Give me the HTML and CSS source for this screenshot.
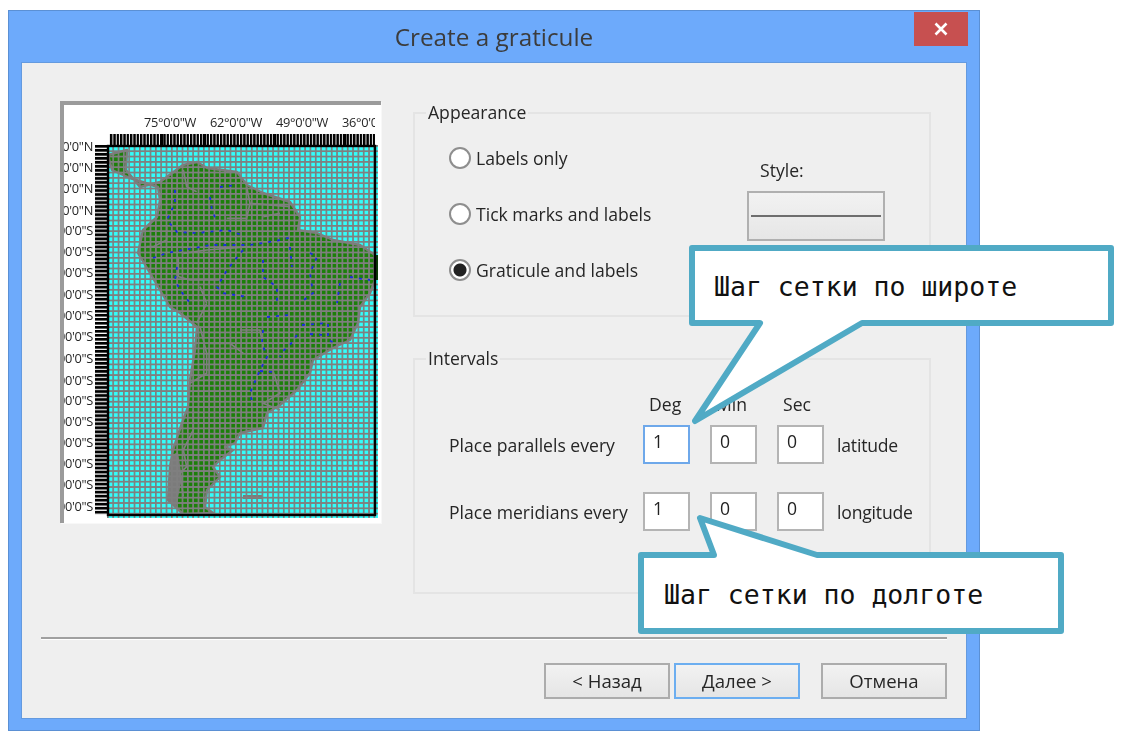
FILE: index.html
```html
<!DOCTYPE html>
<html lang="en">
<head>
	<meta charset="UTF-8">
	<title>Create a graticule</title>
	<link rel="stylesheet" href="styles.css">
</head>
<body>
	<div class="window">
		<div class="titlebar">
			<span></span>
			<div class="title">Create a graticule</div>
			<div class="close">
				<svg width="16" height="14" viewBox="0 0 16 14"><path d="M2.5 1.5 13.5 12.5M13.5 1.5 2.5 12.5" stroke="#fff" stroke-width="2.6" fill="none"/></svg>
			</div>
		</div>
		<div class="client">
			<div class="main">
				<div class="preview">
					<svg class="map" width="317" height="418" viewBox="64 105 317 418">
						<defs>
							<pattern id="cells" x="107" y="145" width="5.33" height="5.33" patternUnits="userSpaceOnUse">
								<path d="M0 0H5.33V1.7H0ZM0 0H1.7V5.33H0Z" fill="#7f7f7f"/>
							</pattern>
							<pattern id="tickx" x="110" y="134" width="3.33" height="11" patternUnits="userSpaceOnUse">
								<rect x="0" width="2.4" height="11" fill="#000"/>
							</pattern>
							<pattern id="ticky" x="95" y="145" width="12" height="4.02" patternUnits="userSpaceOnUse">
								<rect y="0" width="12" height="2.8" fill="#000"/>
							</pattern>
						</defs>
						<rect x="109" y="134" width="266" height="11" fill="url(#tickx)"/>
						<rect x="160" y="134" width="3" height="11"/><rect x="203" y="134" width="3" height="11"/><rect x="273" y="134" width="3" height="11"/><rect x="343" y="134" width="3" height="11"/>
						<rect x="95" y="145" width="12" height="370" fill="url(#ticky)"/>
						<g class="map-label">
							<text x="144" y="127">75°0'0"W</text>
							<text x="210" y="127">62°0'0"W</text>
							<text x="276" y="127">49°0'0"W</text>
							<text x="342" y="127">36°0'0"W</text>
						</g>
						<rect x="375" y="105" width="6" height="41" fill="#fff"/>
						<g class="map-label lat">
							<text x="93" y="151">70'0"N</text>
							<text x="93" y="172">70'0"N</text>
							<text x="93" y="193">30'0"N</text>
							<text x="93" y="215">30'0"N</text>
							<text x="93" y="235">00'0"S</text>
							<text x="93" y="256">00'0"S</text>
							<text x="93" y="277">00'0"S</text>
							<text x="93" y="299">00'0"S</text>
							<text x="93" y="320">00'0"S</text>
							<text x="93" y="341">00'0"S</text>
							<text x="93" y="363">00'0"S</text>
							<text x="93" y="385">00'0"S</text>
							<text x="93" y="405">00'0"S</text>
							<text x="93" y="426">00'0"S</text>
							<text x="93" y="447">00'0"S</text>
							<text x="93" y="468">00'0"S</text>
							<text x="93" y="489">00'0"S</text>
							<text x="93" y="511">00'0"S</text>
						</g>
						<rect x="107" y="145" width="271" height="373" fill="#33fdfa"/>
						<!-- land -->
						<path class="land" d="M108 155 127 150 126 170 140 187 160 182 183 165 197 162 207 168 237 172 247 185 263 193 290 202 300 217 298 230 317 233 333 240 360 245 375 255 375 280 370 293 360 307 358 323 350 340 333 348 313 360 310 373 297 390 280 405 267 413 263 428 240 433 235 443 225 447 233 450 220 460 213 467 220 477 207 490 205 507 213 513 183 514 168 500 170 467 173 450 182 423 188 407 190 380 195 350 197 327 180 313 170 307 160 290 150 273 138 253 143 230 157 217 160 200 158 187 130 178 112 170Z"/>
						<path class="patagonia" d="M172 455 178 452 182 478 176 508 168 500Z"/>
						<path class="land-thin" d="M243 497H262"/>
						<!-- borders, traced on the crop of the top half -->
						<g class="borders" transform="translate(50 90) scale(.3333)">
							<path d="M400 240 410 290 440 305M590 290 600 340 590 385 530 385M600 340 720 350M640 380 690 370M350 410 350 450 310 470 290 470M400 490 470 480 600 470M385 500 385 560 420 570 510 570M450 590 470 640M470 640 440 700"/>
						</g>
						<g class="borders" transform="translate(50 310) scale(.3333)">
							<path d="M450 50 470 130 470 190 420 220M570 60 630 60 640 110M480 100 540 100 580 130M670 185 690 250 640 280 690 300M430 300 430 360 400 420 410 470 390 490M390 490 400 560"/>
						</g>
						<rect x="107" y="145" width="271" height="373" fill="url(#cells)"/>
						<!-- rivers -->
						<g class="rivers">
							<path d="M153 258 167 253 183 250 200 247 210 245 230 245 250 245 263 243 280 240 293 237"/>
							<path d="M175 190 175 203 167 220 177 232 197 233 227 230 242 235"/>
							<path d="M210 197 212 210 217 222M220 187 237 185"/>
							<path d="M177 267 175 280 180 290 190 303"/>
							<path d="M243 250 227 270 217 287 223 293 247 297"/>
							<path d="M263 260 263 277 277 287 277 303"/>
							<path d="M310 253 317 257 310 273 313 293 300 303"/>
							<path d="M290 247 292 267M340 283 337 303M350 277 370 280"/>
							<path d="M267 317 290 315M302 325 328 323 328 340 333 342M310 334 323 335M297 335 290 345 282 352 280 357"/>
							<path d="M263 330 262 343 267 357 260 370 257 377 250 393 253 405M260 371 273 372"/>
						</g>
						<rect x="375" y="255" width="3" height="25" fill="#0c3c08"/>
						<rect x="108" y="146" width="267" height="369" class="map-frame"/>
					</svg>
				</div>
				<div class="groups">
					<fieldset class="group appearance">
						<legend>Appearance</legend>
						<div class="radios">
							<label class="radio-row"><input type="radio" name="kind">Labels only</label>
							<label class="radio-row"><input type="radio" name="kind">Tick marks and labels</label>
							<label class="radio-row"><input type="radio" name="kind" checked>Graticule and labels</label>
						</div>
						<div class="style-box">
							<div class="style-label">Style:</div>
							<div class="style-btn"><div class="style-line"></div></div>
						</div>
					</fieldset>
					<fieldset class="group intervals">
						<legend>Intervals</legend>
						<div class="interval-grid">
							<span></span>
							<span class="col-head">Deg</span>
							<span class="col-head">Min</span>
							<span class="col-head">Sec</span>
							<span></span>
							<span>Place parallels every</span>
							<input class="num focused" value="1">
							<input class="num" value="0">
							<input class="num" value="0">
							<span class="unit">latitude</span>
							<span>Place meridians every</span>
							<input class="num" value="1">
							<input class="num" value="0">
							<input class="num" value="0">
							<span class="unit">longitude</span>
						</div>
					</fieldset>
				</div>
			</div>
			<div class="separator"></div>
			<div class="buttons">
				<button class="btn">&lt; Назад</button>
				<button class="btn default">Далее &gt;</button>
				<button class="btn cancel">Отмена</button>
			</div>
		</div>
	</div>

	<div class="callout callout-lat">
		<svg class="callout-shape" width="440" height="190" viewBox="0 0 440 190"><path d="M3 3H422V78H173L6 176 71 78H3Z"/></svg>
		<span class="callout-text">Шаг сетки по широте</span>
	</div>
	<div class="callout callout-lon">
		<svg class="callout-shape" width="440" height="130" viewBox="0 0 440 130"><path d="M3 42H76L62 5 179 42H423V118H3Z"/></svg>
		<span class="callout-text">Шаг сетки по долготе</span>
	</div>
</body>
</html>
```

FILE: styles.css
```css
* {margin: 0;padding: 0;box-sizing: border-box;}
html, body {height: 100%;background: #fff;overflow: hidden;}
body {position: relative;font-family: "Open Sans", "Noto Sans", sans-serif;font-size: 17.6px;color: #262626;}

.window {width: 972px;height: 721px;margin: 10px 0 0 8px;background: #6daafb;border: 1px solid #5b90d4;display: flex;flex-direction: column;}
.titlebar {height: 51px;flex: none;display: grid;grid-template-columns: 1fr auto 1fr;padding: 0 11px;}
.title {font-size: 24.3px;color: #3c3c3c;padding-top: 9px;filter: blur(.35px);}
.close {justify-self: end;width: 54px;height: 34px;margin-top: 1px;background: #c75050;display: flex;align-items: center;justify-content: center;}

.client {margin: 0 12px 11px;flex: 1;background: #efefef;border: 1px solid #649adf;display: flex;flex-direction: column;}
.main {display: flex;height: 573px;padding: 38px 0 0 38px;}

.preview {width: 321px;height: 422px;background: #fff;border-style: solid;border-width: 4px 0 0 4px;border-color: #9b9b9b;flex: none;box-shadow: 1px 1px 0 #f8f8f8;}
.map {display: block;}
.map-label {font-size: 12.8px;fill: #262626;letter-spacing: -.3px;filter: blur(.3px);}
.lat {text-anchor: end;}
.land {fill: #1c7f0a;stroke: #7b7b7b;stroke-width: 2.4;stroke-linejoin: round;}
.patagonia {fill: #7b7b7b;}
.land-thin {stroke: #7b7b7b;stroke-width: 4;fill: none;}
.borders path {fill: none;stroke: #7f7f7f;stroke-width: 5;}
.rivers path {fill: none;stroke: #1c2ce0;stroke-width: 1.8;stroke-dasharray: 3 6;}
.map-frame {fill: none;stroke: #000;stroke-width: 2.4;}

.groups {margin-left: 32px;width: 518px;display: flex;flex-direction: column;gap: 30px;filter: blur(.35px);}
.group {border: 2px solid #e4e4e4;padding: 0 0 0 34px;}
.group legend {margin-left: -23px;padding: 0 2px;line-height: 23px;}
.appearance {height: 216px;display: flex;}
.intervals {height: 247px;}

.radios {width: 298px;padding-top: 22px;display: flex;flex-direction: column;gap: 33px;}
.radio-row {display: flex;align-items: center;gap: 5px;height: 23px;}
.radio-row input {appearance: none;width: 22px;height: 22px;border-radius: 50%;border: 2px solid #8e8e8e;background: #fff;}
.radio-row input:checked {background: radial-gradient(circle, #222 0 6px, #fff 7px);}
.style-box {padding-top: 34px;}
.style-label {margin-left: 13px;line-height: 24px;}
.style-btn {width: 138px;height: 50px;margin-top: 9px;border: 2px solid #b0b0b0;background: linear-gradient(#f2f2f2, #e6e6e6);padding-top: 22px;}
.style-line {height: 2px;margin: 0 2px;background: #6e6e6e;}

.interval-grid {display: grid;grid-template-columns: 174px 47px 47px 47px auto;column-gap: 20px;row-gap: 28px;align-items: center;padding-top: 22px;}
.interval-grid > span {white-space: nowrap;}
.col-head {padding-left: 6px;margin-bottom: -19px;line-height: 24px;}
.num {width: 47px;height: 39px;border: 2px solid #b4b4b4;background: #fff;font: inherit;color: #222;padding: 0 8px 7px;}
.num.focused {border-color: #6ea8ea;}
.unit {margin-left: -7px;letter-spacing: -.2px;}

.separator {margin: 1px 19px 0;height: 3px;width: 906px;background: #a0a0a0;border-bottom: 1px solid #fff;}
.buttons {display: flex;justify-content: flex-end;gap: 4px;padding: 23px 19px 0 0;filter: blur(.35px);}
.btn {width: 126px;height: 36px;border: 2px solid #acacac;background: linear-gradient(#f2f2f2, #e5e5e5);font: inherit;font-size: 18.6px;line-height: 1;color: #262626;}
.btn.default {border-color: #6caef0;}
.btn.cancel {margin-left: 17px;}

.callout {position: absolute;display: flex;align-items: center;font-family: "DejaVu Sans Mono", monospace;font-size: 26.5px;color: #111;}
.callout-shape {position: absolute;left: 0;top: 0;overflow: visible;}
.callout-shape path {fill: #fff;stroke: #50aac5;stroke-width: 6;stroke-linejoin: round;}
.callout-text {position: relative;white-space: pre;}
.callout-lat {left: 689px;top: 245px;width: 425px;height: 83px;padding-left: 25px;}
.callout-lon {left: 638px;top: 513px;width: 426px;height: 124px;padding: 39px 0 0 26px;}
```
